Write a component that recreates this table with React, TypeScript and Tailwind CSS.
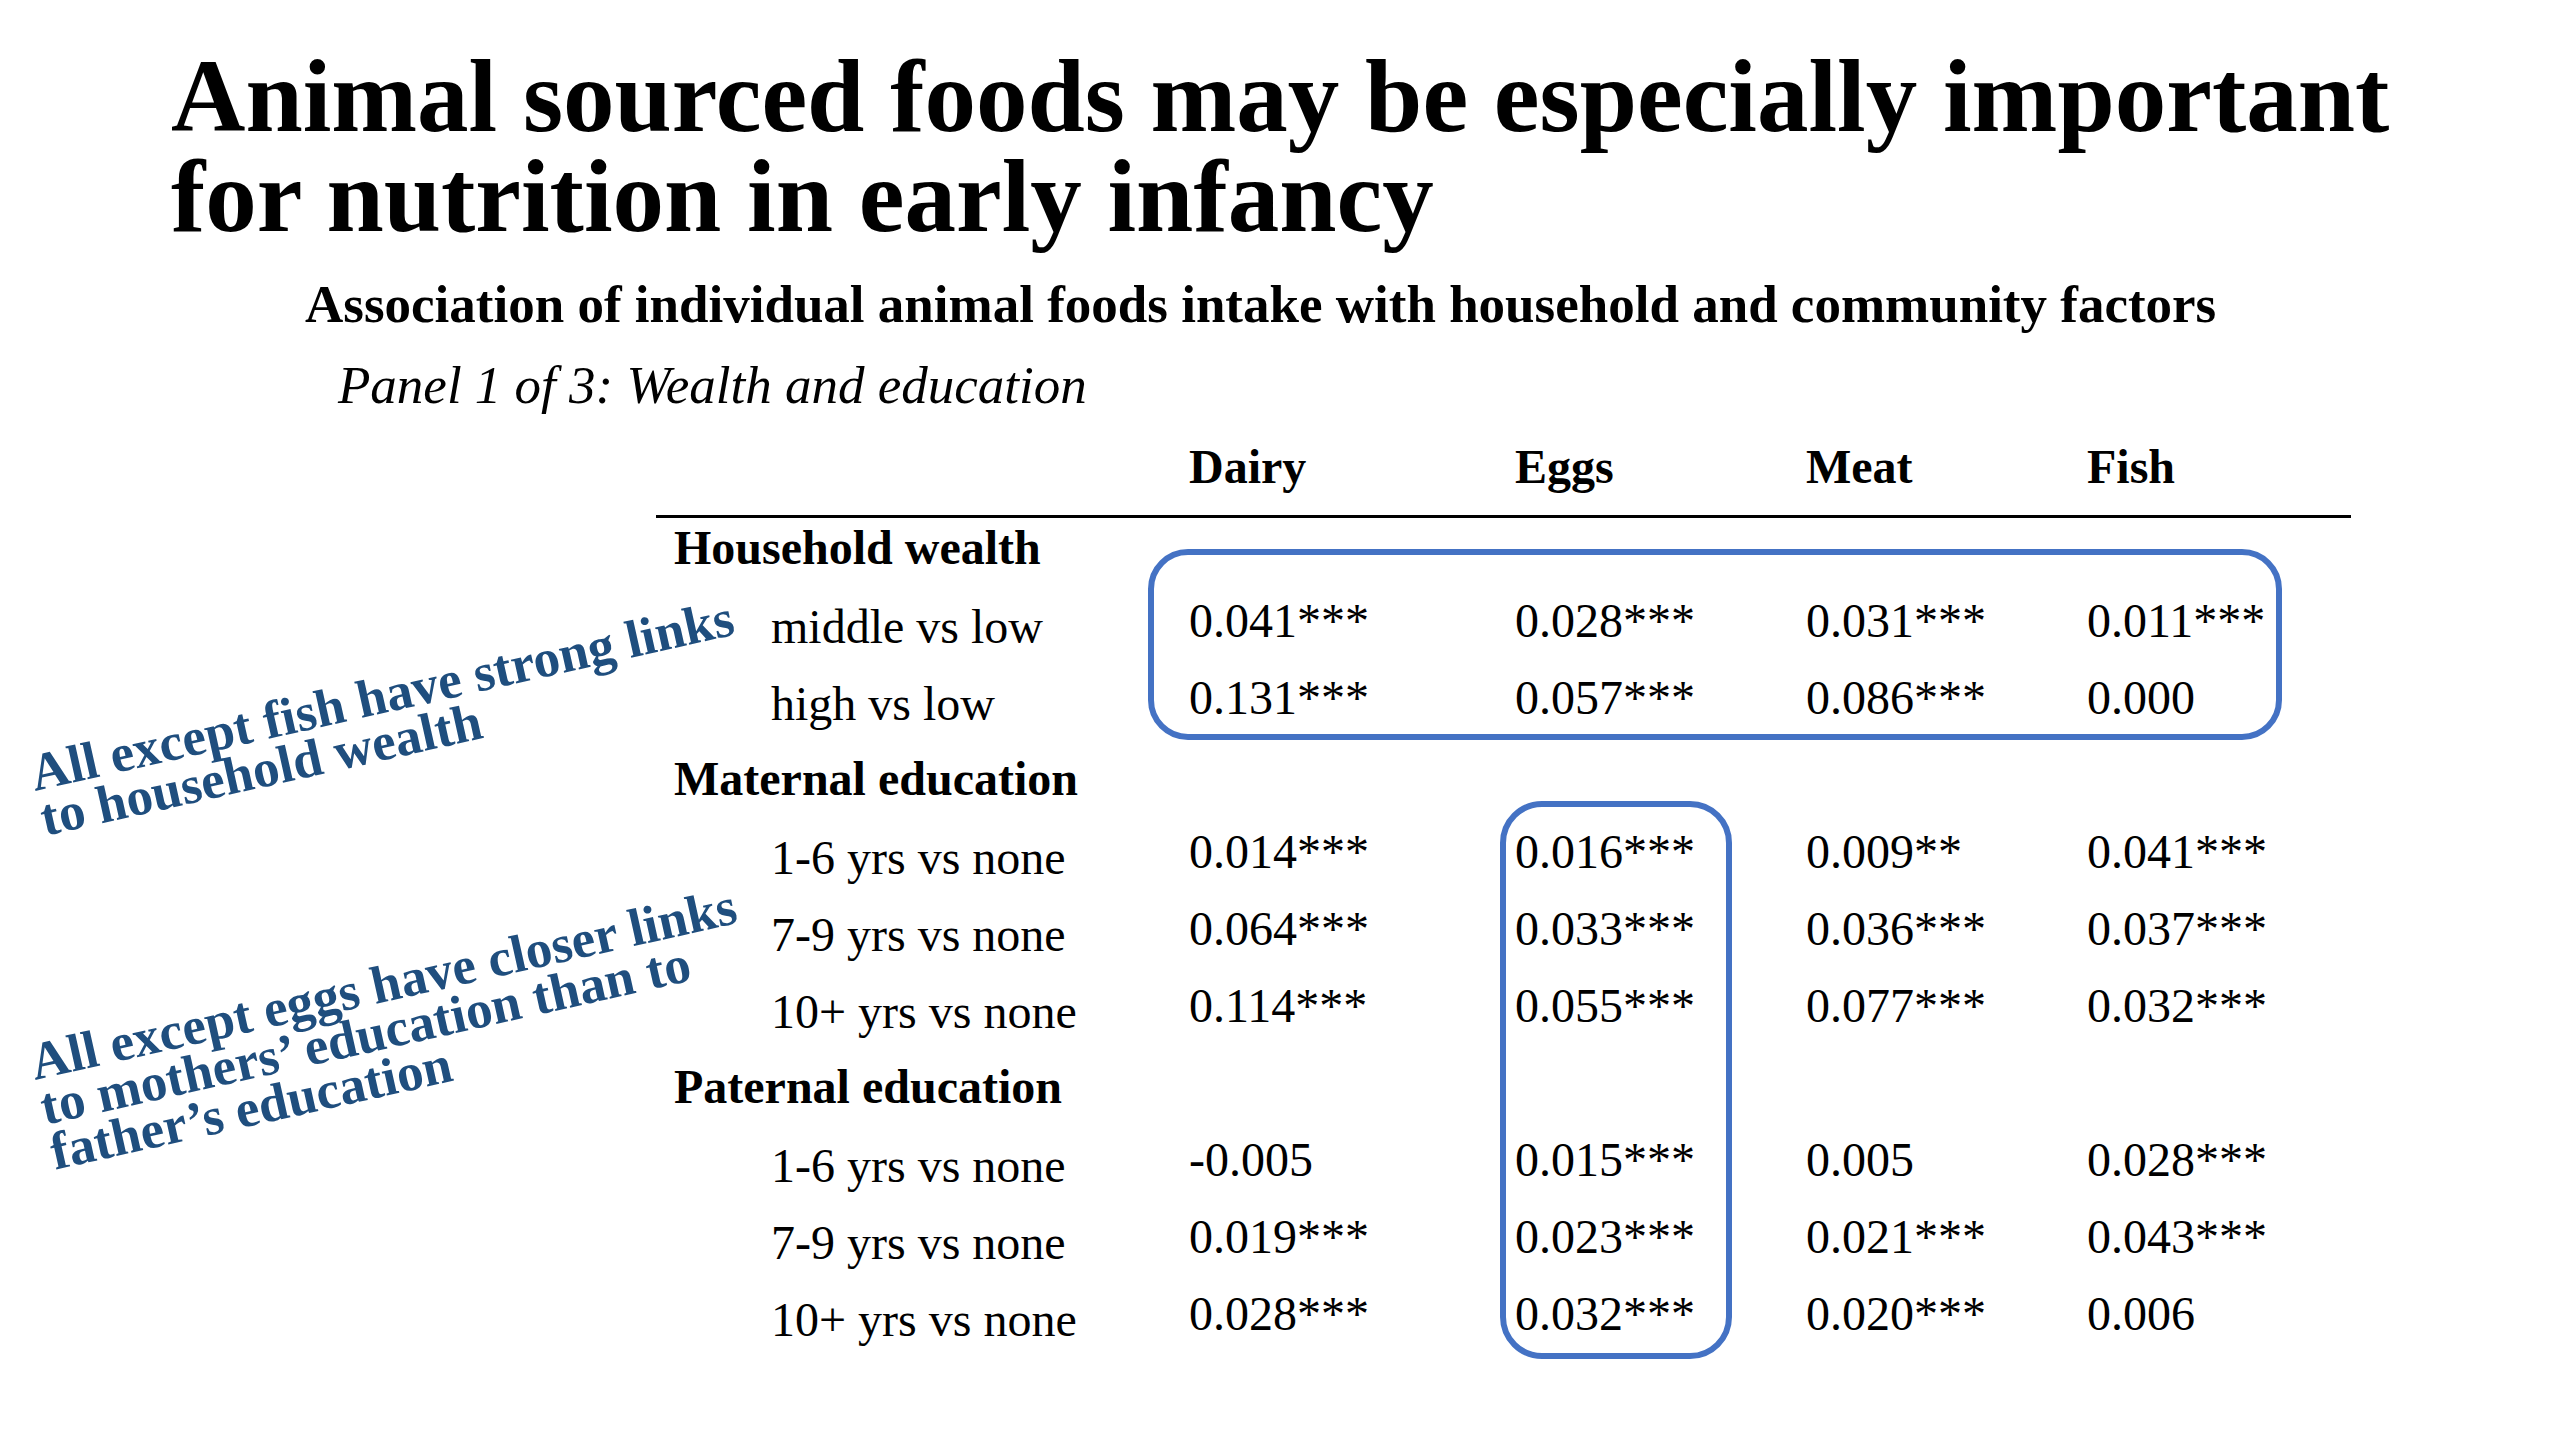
import React from "react";

type Row = {
  label: string;
  group?: boolean;
  values?: string[];
};

const rows: Row[] = [
  { label: "Household wealth", group: true },
  { label: "middle vs low", values: ["0.041***", "0.028***", "0.031***", "0.011***"] },
  { label: "high vs low", values: ["0.131***", "0.057***", "0.086***", "0.000"] },
  { label: "Maternal education", group: true },
  { label: "1-6 yrs vs none", values: ["0.014***", "0.016***", "0.009**", "0.041***"] },
  { label: "7-9 yrs vs none", values: ["0.064***", "0.033***", "0.036***", "0.037***"] },
  { label: "10+ yrs vs none", values: ["0.114***", "0.055***", "0.077***", "0.032***"] },
  { label: "Paternal education", group: true },
  { label: "1-6 yrs vs none", values: ["-0.005", "0.015***", "0.005", "0.028***"] },
  { label: "7-9 yrs vs none", values: ["0.019***", "0.023***", "0.021***", "0.043***"] },
  { label: "10+ yrs vs none", values: ["0.028***", "0.032***", "0.020***", "0.006"] },
];

const columns = ["Dairy", "Eggs", "Meat", "Fish"];

const gridCols = "grid grid-cols-[533px_326px_291px_281px_264px]";

const App: React.FC = () => {
  return (
    <div
      className="relative w-[2560px] h-[1440px] bg-white text-black overflow-hidden"
      style={{ fontFamily: '"Liberation Serif", "Times New Roman", serif' }}
    >
      {/* Slide title */}
      <h1 className="pt-[46px] pl-[171px] text-[103px] leading-[100px] font-bold whitespace-nowrap">
        Animal sourced foods may be especially important
        <br />
        for nutrition in early infancy
      </h1>

      <h2 className="mt-[32px] pl-[305px] text-[53px] leading-none font-bold whitespace-nowrap">
        Association of individual animal foods intake with household and community factors
      </h2>
      <p className="mt-[28px] pl-[338px] text-[53px] leading-none italic">
        Panel 1 of 3: Wealth and education
      </p>

      {/* Table */}
      <div className="relative ml-[656px] mt-[31px] w-[1695px]">
        <div className={`${gridCols} text-[48px] leading-none font-bold`}>
          <div />
          {columns.map((c) => (
            <div key={c}>{c}</div>
          ))}
        </div>
        <div className="mt-[24px] h-[3px] bg-black" />

        {rows.map((r, i) => (
          <div key={i} className={`${gridCols} h-[77px] text-[48px] leading-none`}>
            {r.group ? (
              <div className="pt-[6px] pl-[18px] font-bold whitespace-nowrap">{r.label}</div>
            ) : (
              <div className="pt-[8px] pl-[115px] whitespace-nowrap">{r.label}</div>
            )}
            {(r.values ?? ["", "", "", ""]).map((v, j) => (
              <div key={j} className="pt-[2px] whitespace-nowrap">
                {v}
              </div>
            ))}
          </div>
        ))}

        {/* highlight boxes */}
        <div className="absolute left-[492px] top-[106px] w-[1134px] h-[191px] rounded-[40px] border-[6px] border-[#4472c4]" />
        <div className="absolute left-[844px] top-[358px] w-[232px] h-[558px] rounded-[42px] border-[6px] border-[#4472c4]" />
      </div>

      {/* Rotated annotations */}
      <div className="absolute left-[26px] top-[751px] origin-top-left -rotate-[12.6deg] text-[53px] leading-[46px] font-bold text-[#1f4e7e] whitespace-nowrap">
        All except fish have strong links
        <br />
        to household wealth
      </div>
      <div className="absolute left-[26px] top-[1040px] origin-top-left -rotate-[12.6deg] text-[53px] leading-[46px] font-bold text-[#1f4e7e] whitespace-nowrap">
        All except eggs have closer links
        <br />
        to mothers’ education than to
        <br />
        father’s education
      </div>
    </div>
  );
};

export default App;
